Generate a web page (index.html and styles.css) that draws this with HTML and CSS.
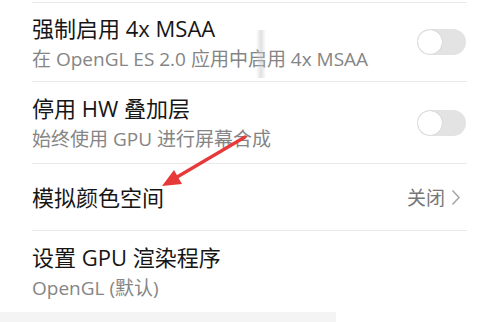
FILE: index.html
```html
<!DOCTYPE html>
<html lang="zh-CN">
<head>
<meta charset="utf-8">
<link rel="stylesheet" href="styles.css">
</head>
<body>
<div class="screen">
  <div class="list">
    <div class="row row-1">
      <div class="texts">
        <div class="title">强制启用 4x MSAA</div>
        <div class="sub">在 OpenGL ES 2.0 应用中启用 4x MSAA</div>
      </div>
      <div class="toggle"><span class="knob"></span></div>
    </div>
    <div class="row row-2">
      <div class="texts">
        <div class="title">停用 HW 叠加层</div>
        <div class="sub">始终使用 GPU 进行屏幕合成</div>
      </div>
      <div class="toggle"><span class="knob"></span></div>
    </div>
    <div class="row row-3">
      <div class="texts">
        <div class="title">模拟颜色空间</div>
      </div>
      <div class="value">关闭
        <svg class="chev" width="10" height="17" viewBox="0 0 10 17"><polyline points="1.5,1.5 8,8.5 1.5,15.5" fill="none" stroke="#a8a8a8" stroke-width="1.6"/></svg>
      </div>
    </div>
    <div class="row row-4">
      <div class="texts">
        <div class="title">设置 GPU 渲染程序</div>
        <div class="sub">OpenGL (默认)</div>
      </div>
    </div>
  </div>
  <div class="bottom-band"><div class="band-left"></div></div>
  <div class="scroll-ghost"></div>
  <svg class="arrow" width="500" height="322" viewBox="0 0 500 322">
    <line x1="245" y1="137" x2="172" y2="180" stroke="#e8393a" stroke-width="3.2" stroke-linecap="round"/>
    <polygon points="162,186 174,170 182,184" fill="#e8393a"/>
  </svg>
</div>
</body>
</html>
```
FILE: styles.css
```css
html, body {
  margin: 0;
  padding: 0;
  background: #ffffff;
}
.screen {
  position: relative;
  width: 500px;
  height: 322px;
  overflow: hidden;
  font-family: "Open Sans", "Noto Sans CJK SC", sans-serif;
  background: #ffffff;
}
.list {
  margin: 0 33px 0 32px;
  padding-top: 2px;
}
.list::before {
  content: "";
  display: block;
  height: 1px;
  background: #e9e9e9;
}
.row {
  display: flex;
  align-items: center;
  justify-content: space-between;
  border-bottom: 1px solid #e9e9e9;
}
.row-1 { height: 78px; }
.row-2 { height: 81px; }
.row-3 { height: 66px; }
.row-4 { height: 80px; border-bottom: 0; }
.texts {
  display: flex;
  flex-direction: column;
  gap: 5px;
}
.title {
  font-size: 22px;
  line-height: 28px;
  color: #161616;
}
.sub {
  font-size: 19px;
  line-height: 24px;
  color: #858585;
}
.toggle {
  width: 49px;
  height: 26px;
  border-radius: 13px;
  background: #e3e3e3;
  position: relative;
  margin-right: 1px;
}
.knob {
  position: absolute;
  left: 1px;
  top: 1px;
  width: 24px;
  height: 24px;
  border-radius: 50%;
  background: #ffffff;
  box-shadow: 0 0 1px rgba(0,0,0,0.25);
}
.value {
  display: flex;
  align-items: center;
  gap: 6px;
  font-size: 19px;
  color: #777777;
  margin-right: 6px;
}
.bottom-band {
  position: absolute;
  left: 0;
  right: 0;
  bottom: 0;
  height: 10px;
  background: #ffffff;
}
.band-left {
  width: 336px;
  height: 100%;
  background: #f4f4f4;
}
.scroll-ghost {
  position: absolute;
  left: 256px;
  top: 30px;
  width: 10px;
  height: 48px;
  background: linear-gradient(to right, rgba(255,255,255,0), rgba(200,200,200,0.55) 50%, rgba(255,255,255,0));
}
.arrow {
  position: absolute;
  left: 0;
  top: 0;
  pointer-events: none;
}
```
